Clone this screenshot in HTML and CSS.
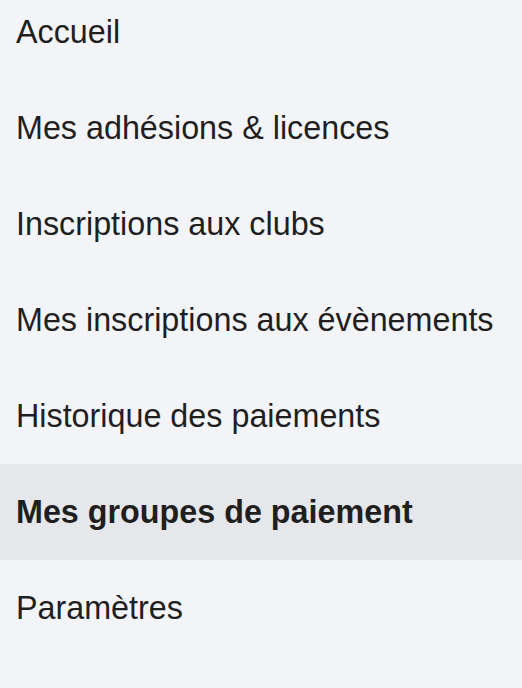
FILE: index.html
```html
<!DOCTYPE html>
<html lang="fr">
<head>
<meta charset="utf-8">
<link rel="stylesheet" href="styles.css">
</head>
<body>
<nav class="menu">
  <a class="item" href="#">Accueil</a>
  <a class="item" href="#">Mes adhésions &amp; licences</a>
  <a class="item" href="#">Inscriptions aux clubs</a>
  <a class="item" href="#">Mes inscriptions aux évènements</a>
  <a class="item" href="#">Historique des paiements</a>
  <a class="item active" href="#">Mes groupes de paiement</a>
  <a class="item" href="#">Paramètres</a>
</nav>
</body>
</html>
```
FILE: styles.css
```css
html, body {
  margin: 0;
  padding: 0;
  background: #f3f4f8;
  height: 100%;
  overflow: hidden;
}
.menu {
  display: flex;
  flex-direction: column;
  margin-top: -16px;
}
.item {
  display: flex;
  align-items: center;
  height: 96px;
  padding: 0 16px;
  font-family: "Liberation Sans", Arial, sans-serif;
  font-size: 32.3px;
  color: #1f1f1f;
  text-decoration: none;
}
.item.active {
  background: #e6e7eb;
  font-weight: bold;
}
```
